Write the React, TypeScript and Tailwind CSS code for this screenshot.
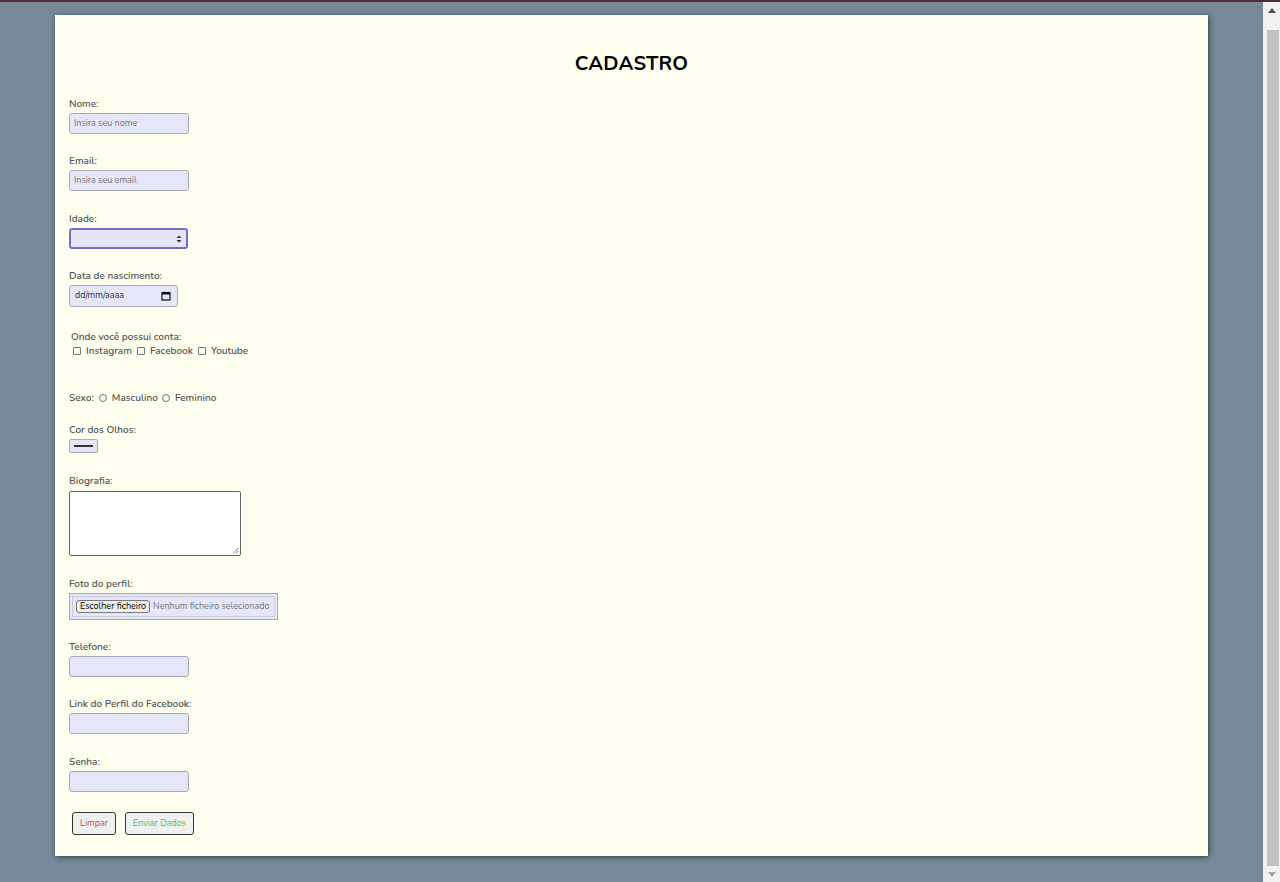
import React from "react";

const font = { fontFamily: '"Nunito", "Noto Sans", "Open Sans", sans-serif' };

function Label({ children }: { children: React.ReactNode }) {
  return <div className="text-[10px] leading-[14px] font-semibold text-[#555555]">{children}</div>;
}

function TextBox({ placeholder }: { placeholder?: string }) {
  return (
    <div className="mt-[2px] w-[120px] h-[21px] bg-[#e6e6fa] border border-[#a9a9b8] rounded-[3px] flex items-center pl-[4px] text-[9px] text-[#777777]">
      {placeholder}
    </div>
  );
}

function Box() {
  return <span className="inline-block w-[8px] h-[8px] border border-[#767676] rounded-[1px] bg-white mr-[5px]" />;
}
function Radio() {
  return <span className="inline-block w-[8px] h-[8px] border border-[#767676] rounded-full bg-white mr-[5px]" />;
}

function Scrollbar() {
  return (
    <div className="w-[17px] h-full bg-[#f1f1f1] flex flex-col items-center">
      <div className="h-[17px] w-full flex items-center justify-center">
        <svg width="8" height="5" viewBox="0 0 8 5">
          <path d="M4 0 L8 5 L0 5 Z" fill="#505050" />
        </svg>
      </div>
      <div className="mt-[11px] w-[12px] ml-[2px] h-[836px] bg-[#c1c1c1]" />
      <div className="flex-1 w-full flex items-center justify-center">
        <svg width="8" height="5" viewBox="0 0 8 5">
          <path d="M0 0 L8 0 L4 5 Z" fill="#a3a3a3" />
        </svg>
      </div>
    </div>
  );
}

export default function App() {
  return (
    <div style={font} className="h-[882px] overflow-hidden border-t-2 border-[#4d2b3b] flex">
      <div className="flex-1 bg-[#778899] pt-[13px] pl-[55px]">
        <div className="w-[1153px] h-[841px] bg-[#fffff0] shadow-[1px_1px_5px_rgba(0,0,0,0.55)] px-[14px] pt-[1px]">
          <h1 className="text-center text-[20px] font-bold text-black mt-[36px] leading-[24px] tracking-[0.2px]">CADASTRO</h1>

          <div className="mt-[21px]">
            <Label>Nome:</Label>
            <TextBox placeholder="Insira seu nome" />
          </div>

          <div className="mt-[20px]">
            <Label>Email:</Label>
            <TextBox placeholder="Insira seu email" />
          </div>

          <div className="mt-[21px]">
            <Label>Idade:</Label>
            <div className="mt-[2px] w-[119px] h-[21px] bg-[#e6e6fa] border-2 border-[#7b6ccc] rounded-[3px] flex items-center justify-end pr-[4px]">
              <svg width="6" height="8" viewBox="0 0 6 8">
                <path d="M3 0.5 L5.5 3 L0.5 3 Z" fill="#333" />
                <path d="M3 7.5 L5.5 5 L0.5 5 Z" fill="#333" />
              </svg>
            </div>
          </div>

          <div className="mt-[20px]">
            <Label>Data de nascimento:</Label>
            <div className="mt-[2px] w-[109px] h-[22px] bg-[#e6e6fa] border border-[#a9a9b8] rounded-[3px] flex items-center justify-between pl-[5px] pr-[6px] text-[9px] text-[#333]">
              <span>dd/mm/aaaa</span>
              <svg width="10" height="10" viewBox="0 0 10 10">
                <rect x="1" y="1.5" width="8" height="7.5" fill="none" stroke="#111" strokeWidth="1.2" />
                <rect x="1" y="1.5" width="8" height="2" fill="#111" />
              </svg>
            </div>
          </div>

          <div className="mt-[23px] pl-[2px]">
            <Label>Onde você possui conta:</Label>
            <div className="flex items-center text-[10px] leading-[14px] font-semibold text-[#555555] pl-[2px]">
              <Box />
              <span className="mr-[5px]">Instagram</span>
              <Box />
              <span className="mr-[5px]">Facebook</span>
              <Box />
              <span>Youtube</span>
            </div>
          </div>

          <div className="mt-[33px] flex items-center text-[10px] leading-[14px] font-semibold text-[#555555]">
            <span className="mr-[5px]">Sexo:</span>
            <Radio />
            <span className="mr-[4px]">Masculino</span>
            <Radio />
            <span>Feminino</span>
          </div>

          <div className="mt-[18px]">
            <Label>Cor dos Olhos:</Label>
            <div className="mt-[2px] w-[29px] h-[14px] bg-[#e6e6fa] border border-[#a9a9b8] rounded-[2px] flex items-center justify-center">
              <div className="w-[19px] h-[2px] bg-[#333]" />
            </div>
          </div>

          <div className="mt-[21px]">
            <Label>Biografia:</Label>
            <div className="relative mt-[3px] w-[172px] h-[65px] bg-white border border-[#666] rounded-[2px]">
              <svg className="absolute right-[1px] bottom-[1px]" width="7" height="7" viewBox="0 0 7 7">
                <path d="M6.5 1 L1 6.5 M6.5 4 L4 6.5" stroke="#555" strokeWidth="0.8" />
              </svg>
            </div>
          </div>

          <div className="mt-[21px]">
            <Label>Foto do perfil:</Label>
            <div className="mt-[2px] w-[209px] h-[27px] bg-[#e6e6fa] border border-[#a9a9b8] p-[2px]">
              <div className="w-full h-full border border-[#c9c9d8] flex items-center pl-[3px]">
                <span className="inline-block border border-[#767676] bg-[#efefef] rounded-[3px] text-[9px] leading-[11px] px-[3px] text-black">Escolher ficheiro</span>
                <span className="ml-[3px] text-[9px] text-[#777]">Nenhum ficheiro selecionado</span>
              </div>
            </div>
          </div>

          <div className="mt-[20px]">
            <Label>Telefone:</Label>
            <TextBox />
          </div>

          <div className="mt-[20px]">
            <Label>Link do Perfil do Facebook:</Label>
            <TextBox />
          </div>

          <div className="mt-[21px]">
            <Label>Senha:</Label>
            <TextBox />
          </div>

          <div className="mt-[20px] flex pl-[3px] gap-[9px]">
            <div className="w-[44px] h-[23px] border border-[#333] rounded-[3px] bg-[#f0f0f0] flex items-center justify-center text-[9px] text-[#d14b4b]">Limpar</div>
            <div className="w-[69px] h-[23px] border border-[#333] rounded-[3px] bg-[#f0f0f0] flex items-center justify-center text-[9px] text-[#5cb85c]">Enviar Dados</div>
          </div>
        </div>
      </div>
      <Scrollbar />
    </div>
  );
}
